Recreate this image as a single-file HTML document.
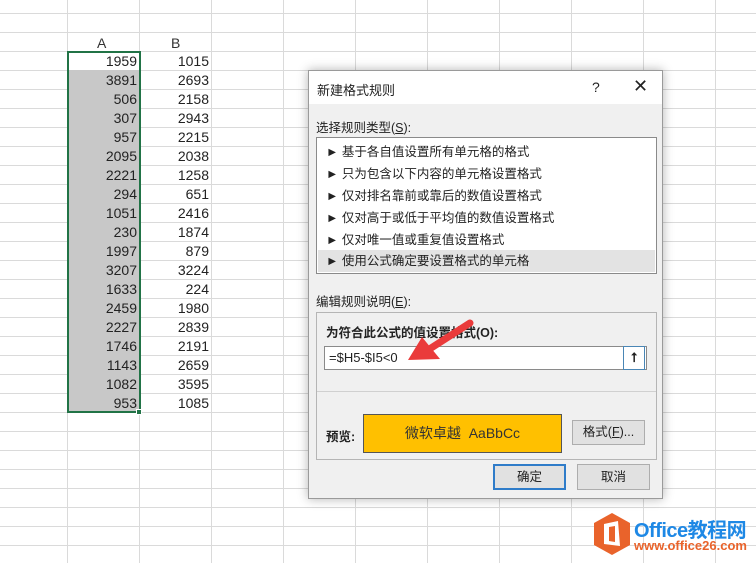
<!DOCTYPE html>
<html><head><meta charset="utf-8"><style>
body{margin:0;width:756px;height:563px;overflow:hidden;position:relative;background:#fff;font-family:"Liberation Sans","Noto Sans CJK SC",sans-serif;}
*{box-sizing:border-box;}
.grid{position:absolute;left:0;top:0;width:756px;height:563px;
background-image:linear-gradient(#dadada 1px,transparent 1px),linear-gradient(90deg,#dadada 1px,transparent 1px);
background-size:72px 19px;background-position:67px 13px;}
.c{position:absolute;font-size:14px;color:#222;text-align:right;width:66px;height:19px;line-height:19px;}
.abs{position:absolute;}
.dlg{position:absolute;left:308px;top:70px;width:355px;height:429px;background:#f0f0f0;border:1px solid #9a9a9a;box-shadow:0 0 10px rgba(0,0,0,.3);font-size:12.5px;color:#222;}
.item{position:absolute;left:1px;width:337px;height:22px;line-height:22px;padding-left:8px;font-size:12.5px;}
.btn{position:absolute;background:#e1e1e1;border:1px solid #adadad;text-align:center;font-size:12.5px;}
</style></head><body>
<div class="grid"></div>
<div class="abs" style="left:69px;top:70px;width:70px;height:343px;background:#c8c8c8"></div>
<div class="abs" style="left:67px;top:51px;width:74px;height:362px;border:2px solid #217346"></div>
<div class="abs" style="left:136px;top:409px;width:6px;height:6px;background:#217346;border:1px solid #fff"></div>
<div class="abs" style="left:97px;top:35px;font-size:14px;color:#333">A</div>
<div class="abs" style="left:171px;top:35px;font-size:14px;color:#333">B</div>
<div id="cells"></div>
<script>
var a=[1959,3891,506,307,957,2095,2221,294,1051,230,1997,3207,1633,2459,2227,1746,1143,1082,953];
var b=[1015,2693,2158,2943,2215,2038,1258,651,2416,1874,879,3224,224,1980,2839,2191,2659,3595,1085];
var h="";for(var i=0;i<19;i++){var y=52+19*i;h+='<div class="c" style="left:71px;top:'+y+'px">'+a[i]+'</div><div class="c" style="left:143px;top:'+y+'px">'+b[i]+'</div>';}
document.getElementById("cells").innerHTML=h;
</script>
<div class="dlg">
<div class="abs" style="left:0;top:0;width:353px;height:33px;background:#fff"></div>
<div class="abs" style="left:8px;top:9px;font-size:13px">新建格式规则</div>
<div class="abs" style="left:283px;top:8px;font-size:14px">?</div>
<div class="abs" style="left:324px;top:5px;font-size:18px;font-weight:300">✕</div>
<div class="abs" style="left:7px;top:46px">选择规则类型(<u>S</u>):</div>
<div class="abs" style="left:7px;top:66px;width:341px;height:137px;background:#fff;border:1px solid #8a8a8a">
<div class="item" style="top:3px">► 基于各自值设置所有单元格的格式</div>
<div class="item" style="top:25px">► 只为包含以下内容的单元格设置格式</div>
<div class="item" style="top:47px">► 仅对排名靠前或靠后的数值设置格式</div>
<div class="item" style="top:69px">► 仅对高于或低于平均值的数值设置格式</div>
<div class="item" style="top:91px">► 仅对唯一值或重复值设置格式</div>
<div class="item" style="top:112px;background:#e3e3e3">► 使用公式确定要设置格式的单元格</div>
</div>
<div class="abs" style="left:7px;top:220px">编辑规则说明(<u>E</u>):</div>
<div class="abs" style="left:7px;top:241px;width:341px;height:148px;border:1px solid #b5b5b5">
<div class="abs" style="left:9px;top:9px;font-weight:bold">为符合此公式的值设置格式(O):</div>
<div class="abs" style="left:7px;top:33px;width:323px;height:24px;background:#fff;border:1px solid #8a8a8a">
<div class="abs" style="left:4px;top:3px;font-size:13px">=$H5-$I5&lt;0</div>
<div class="abs" style="left:298px;top:-1px;width:22px;height:24px;border:1px solid #4a86b5;text-align:center;font-weight:bold;font-size:13px;line-height:22px">⭡</div>
</div>
<div class="abs" style="left:0;top:78px;width:339px;height:1px;background:#d0d0d0"></div>
<div class="abs" style="left:9px;top:113px;font-weight:bold">预览:</div>
<div class="abs" style="left:46px;top:101px;width:199px;height:39px;background:#ffc000;border:1px solid #555;text-align:center;line-height:37px;font-size:14px;color:#333">微软卓越&nbsp; AaBbCc</div>
<div class="btn" style="left:255px;top:107px;width:73px;height:25px;line-height:23px">格式(<u>F</u>)...</div>
</div>
<div class="btn" style="left:184px;top:393px;width:73px;height:26px;line-height:22px;border:2px solid #2f7cc9">确定</div>
<div class="btn" style="left:268px;top:393px;width:73px;height:26px;line-height:24px">取消</div>
</div>
<svg class="abs" style="left:400px;top:315px" width="80" height="55" viewBox="0 0 80 55">
<path d="M70 8 L28 35" stroke="#ea3b3b" stroke-width="7" stroke-linecap="round"/>
<path d="M8 45 L22 22 L40 44 Z" fill="#ea3b3b"/>
</svg>
<svg class="abs" style="left:592px;top:512px" width="40" height="44" viewBox="0 0 40 44">
<path d="M20 1 L38 11 L38 33 L20 43 L2 33 L2 11 Z" fill="#e9632b"/>
<path d="M12 12 L26 9 L28 34 L12 32 Z" fill="#fff"/>
<path d="M17 15 L23 14 L23 30 L17 29 Z" fill="#e9632b"/>
</svg>
<div class="abs" style="left:634px;top:514px;font-size:20px;font-weight:bold;color:#1e88e5;letter-spacing:-0.5px">Office教程网</div>
<div class="abs" style="left:634px;top:538px;font-size:13px;font-weight:bold;color:#e9632b">www.office26.com</div>
</body></html>
